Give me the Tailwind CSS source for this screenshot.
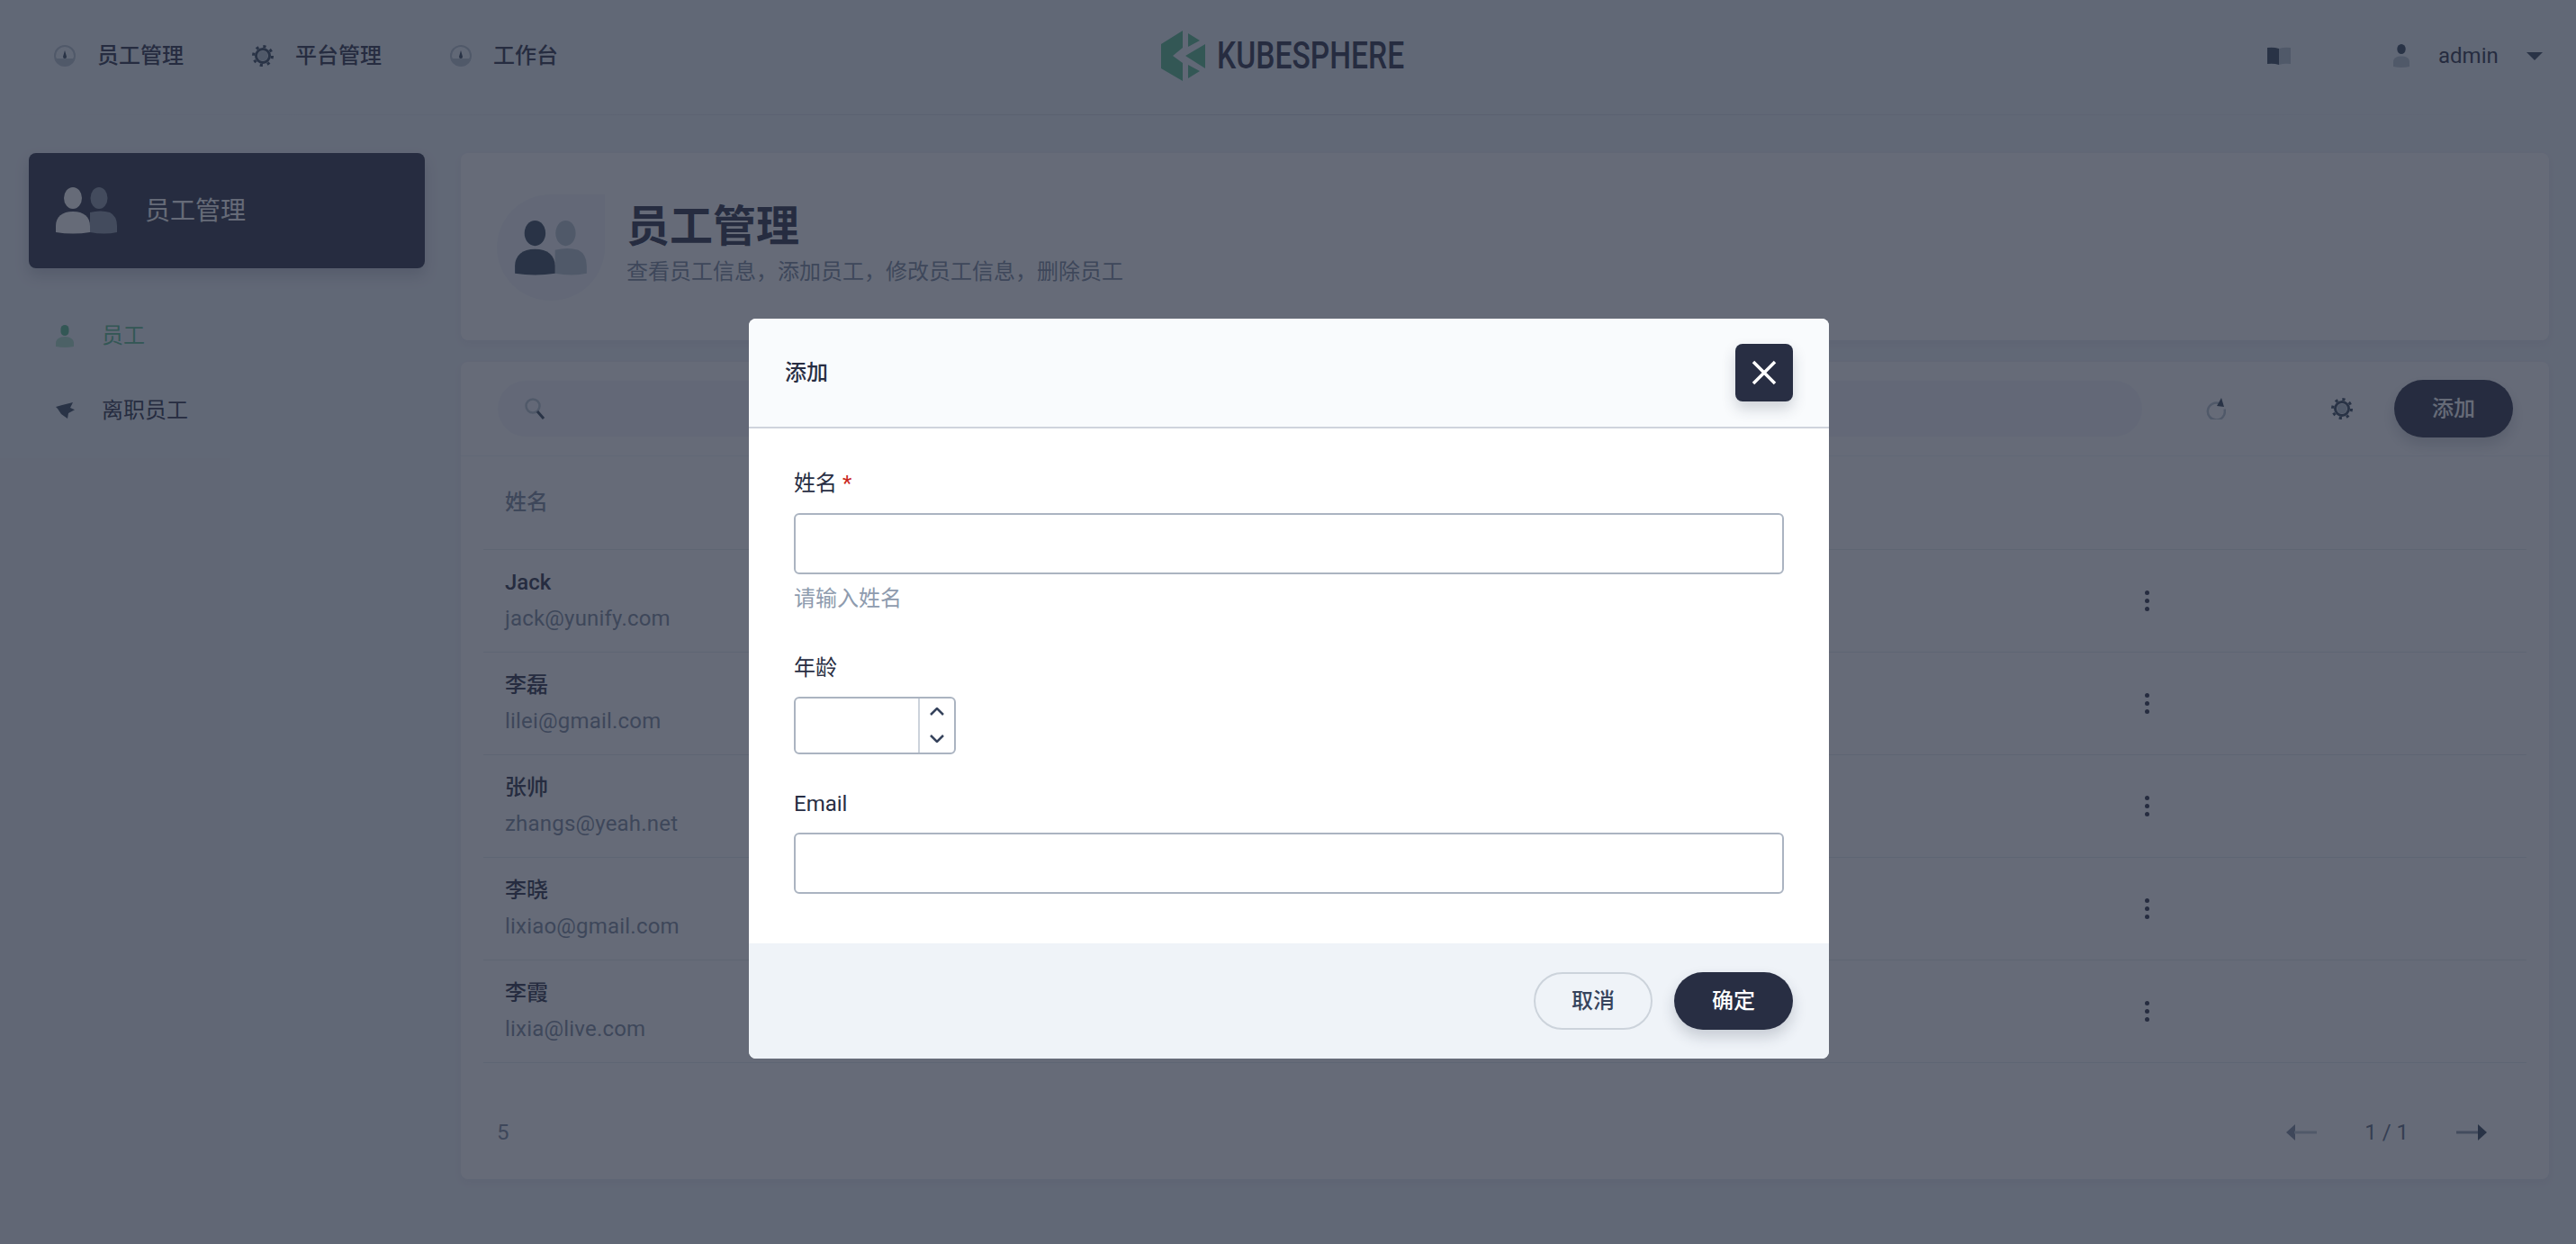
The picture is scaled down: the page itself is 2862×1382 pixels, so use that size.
<!DOCTYPE html>
<html lang="zh-CN">
<head>
  <meta charset="UTF-8">
  <title>KubeSphere 员工管理</title>
  <script src="https://cdn.jsdelivr.net/npm/@tailwindcss/browser@4"></script>
</head>
<body class="relative w-[2862px] h-[1382px] overflow-hidden bg-[#eff3f8] text-[#282e43] text-[24px] font-['Roboto','Noto_Sans_CJK_SC',sans-serif]">

  <!-- Top nav -->
  <header class="h-[128px] flex items-center pb-[4px] relative">
    <div class="w-[1290px] shrink-0 flex items-center pl-[60px] font-medium">
      <svg class="w-[24px] h-[24px] mr-[24px]" viewBox="0 0 24 24"><circle cx="12" cy="12" r="12" fill="#b6c2cd"/><path d="M2 12a10 10 0 0 1 20 0c0 2-1 3-1 3H3s-1-1-1-3z" fill="#eff4f9"/><path d="M12 6l2 7a2 2 0 1 1-4 0z" fill="#324558"/></svg>
      <span class="mr-[76px]">员工管理</span>
      <svg class="w-[24px] h-[24px] mr-[24px]" viewBox="0 0 24 24"><circle cx="12" cy="12" r="10.500" fill="none" stroke="#324558" stroke-width="3" stroke-dasharray="3.200 5.050"/><circle cx="12" cy="12" r="7.500" fill="none" stroke="#324558" stroke-width="3"/><circle cx="12" cy="12" r="5.500" fill="#b6c2cd"/></svg>
      <span class="mr-[76px]">平台管理</span>
      <svg class="w-[24px] h-[24px] mr-[24px]" viewBox="0 0 24 24"><circle cx="12" cy="12" r="12" fill="#b6c2cd"/><path d="M2 12a10 10 0 0 1 20 0c0 2-1 3-1 3H3s-1-1-1-3z" fill="#eff4f9"/><path d="M12 6l2 7a2 2 0 1 1-4 0z" fill="#324558"/></svg>
      <span>工作台</span>
    </div>
    <div class="flex items-center">
      <svg class="w-[49px] h-[56px] mr-[13px]" viewBox="0 0 49 56" fill="#55bc8a"><path d="M24 0L0 15v27l24 14V36l-11-8 11-9z"/><path d="M30 3l13 8-13 7z"/><path d="M49 15v27L27 28z"/><path d="M30 38l13 7-13 8z"/></svg>
      <span class="w-[207px] whitespace-nowrap origin-left scale-x-[0.8] text-[42px] leading-none font-medium">KUBESPHERE</span>
    </div>
    <div class="ml-auto flex items-center pr-[37px]">
      <svg class="w-[26px] h-[20px] mr-[114px]" viewBox="0 0 26 20"><path d="M0 1q7-1 13 1v18q-6-2-13-1z" fill="#324558"/><path d="M13 2q6-2 13-1v18q-7-1-13 1z" fill="#b6c2cd"/></svg>
      <svg class="w-[18px] h-[26px] mr-[32px]" viewBox="0 0 18 26"><ellipse cx="9" cy="5.500" rx="4.700" ry="5.500" fill="#324558"/><path d="M0 20c0-5 4-6.500 9-6.500s9 1.500 9 6.500v5q-9 2-18 0z" fill="#b6c2cd"/></svg>
      <span class="w-[66px] mr-[32px]">admin</span>
      <svg class="w-[18px] h-[9px]" viewBox="0 0 18 9"><path d="M0 0h18l-9 9z" fill="#324558"/></svg>
    </div>
    <div class="absolute left-0 right-0 bottom-0 h-[1px] bg-linear-to-r from-[#eff3f8] via-[#d1d7e0] to-[#eff3f8]"></div>
  </header>

  <div class="flex pt-[42px] pl-[32px]">
    <!-- Sidebar -->
    <aside class="w-[440px] shrink-0">
      <div class="h-[128px] rounded-[8px] bg-[#282e43] text-white text-[28px] flex items-center pl-[30px] shadow-[0_8px_16px_0_rgba(36,46,66,0.2)]">
        <svg class="w-[68px] h-[52px] mr-[31px]" viewBox="0 0 68 52"><ellipse cx="48" cy="12" rx="9.500" ry="12" fill="#8a94a5"/><path d="M38 28q12-3 22 0 8 4 8 15v7q-14 3-30 0z" fill="#8a94a5"/><ellipse cx="19" cy="12" rx="10" ry="12" fill="#fff"/><path d="M0 43c0-10 7-16 19-16s19 6 19 16v7Q19 53 0 50z" fill="#fff"/></svg>
        <span class="pt-[2px]">员工管理</span>
      </div>
      <nav class="mt-[58px] pl-[30px]">
        <div class="h-[34px] flex items-center text-[#55bc8a]">
          <svg class="w-[20px] h-[25px] mr-[31px]" viewBox="0 0 20 25"><rect x="5.500" y="0" width="9" height="12" rx="4.500" fill="#55bc8a"/><path d="M0 20c0-4 4-7 10-7s10 3 10 7v4q-10 2-20 0z" fill="#a8dcc3"/></svg>
          <span>员工</span>
        </div>
        <div class="mt-[49px] h-[34px] flex items-center">
          <svg class="w-[21px] h-[18px] mr-[30px]" viewBox="0 0 21 18"><path d="M0 5l7-2L19 0l-3 6 5 2.300-7 3.700-1 6-7-5-4-6z" fill="#324558"/></svg>
          <span>离职员工</span>
        </div>
      </nav>
    </aside>

    <!-- Content -->
    <main class="ml-[40px] w-[2320px]">
      <section class="h-[208px] rounded-[8px] bg-white shadow-[0_4px_8px_0_rgba(36,46,66,0.06)] flex items-start pl-[40px] pt-[46px]">
        <div class="w-[120px] h-[118px] rounded-[50%] rounded-tr-none bg-[#f3f6fa] flex items-center justify-center shrink-0">
          <svg class="w-[80px] h-[61px]" viewBox="0 0 68 52"><ellipse cx="48" cy="12" rx="9.500" ry="12" fill="#b6c2cd"/><path d="M38 28q12-3 22 0 8 4 8 15v7q-14 3-30 0z" fill="#b6c2cd"/><ellipse cx="19" cy="12" rx="10" ry="12" fill="#324558"/><path d="M0 43c0-10 7-16 19-16s19 6 19 16v7Q19 53 0 50z" fill="#324558"/></svg>
        </div>
        <div class="ml-[24px] pt-[6px]">
          <h1 class="text-[48px] leading-[60px] font-semibold">员工管理</h1>
          <p class="mt-[2px] text-[24px] leading-[36px] text-[#79879c]">查看员工信息，添加员工，修改员工信息，删除员工</p>
        </div>
      </section>

      <section class="mt-[24px] h-[908px] rounded-[8px] bg-white shadow-[0_4px_8px_0_rgba(36,46,66,0.06)]">
        <!-- Toolbar -->
        <div class="h-[105px] border-b border-[#eff3f8] flex items-center pl-[41px] pr-[40px]">
          <div class="w-[1827px] h-[62px] rounded-full bg-[#f3f6fa] flex items-center pl-[29px]">
            <svg class="w-[24px] h-[24px]" viewBox="0 0 24 24"><circle cx="10" cy="9" r="7.500" fill="none" stroke="#b6c2cd" stroke-width="2.500"/><path d="M15 15l7 8" stroke="#324558" stroke-width="3"/></svg>
          </div>
          <svg class="w-[22px] h-[24px] ml-[71px]" viewBox="0 0 22 24"><path d="M15.500 6.500a9.500 9.500 0 1 0 5 6" fill="none" stroke="#b6c2cd" stroke-width="2.500"/><path d="M17 0l3 10-8-1z" fill="#324558"/></svg>
          <svg class="w-[24px] h-[24px] ml-[117px]" viewBox="0 0 24 24"><circle cx="12" cy="12" r="10.500" fill="none" stroke="#324558" stroke-width="3" stroke-dasharray="3.200 5.050"/><circle cx="12" cy="12" r="7.500" fill="none" stroke="#324558" stroke-width="3"/><circle cx="12" cy="12" r="5.500" fill="#b6c2cd"/></svg>
          <button class="ml-[46px] w-[132px] h-[64px] rounded-full bg-[#282e43] text-white font-medium shadow-[0_8px_16px_0_rgba(36,46,66,0.2)]">添加</button>
        </div>

        <!-- Table -->
        <div class="mx-[25px]">
          <div class="h-[104px] border-b border-[#e3e9ef] flex items-center pl-[24px] pb-[2px] font-medium text-[#79879c]">姓名</div>
          <div class="h-[114px] border-b border-[#e3e9ef] flex items-center justify-between pl-[24px] pr-[419px]">
            <div class="leading-[40px] pb-[2px]"><div class="font-medium">Jack</div><div class="text-[#79879c] tracking-[0.2px]">jack@yunify.com</div></div>
            <div class="flex flex-col gap-[3.500px]"><i class="block w-[5.500px] h-[5.500px] rounded-full bg-[#282e43]"></i><i class="block w-[5.500px] h-[5.500px] rounded-full bg-[#282e43]"></i><i class="block w-[5.500px] h-[5.500px] rounded-full bg-[#282e43]"></i></div>
          </div>
          <div class="h-[114px] border-b border-[#e3e9ef] flex items-center justify-between pl-[24px] pr-[419px]">
            <div class="leading-[40px] pb-[2px]"><div class="font-medium">李磊</div><div class="text-[#79879c] tracking-[0.2px]">lilei@gmail.com</div></div>
            <div class="flex flex-col gap-[3.500px]"><i class="block w-[5.500px] h-[5.500px] rounded-full bg-[#282e43]"></i><i class="block w-[5.500px] h-[5.500px] rounded-full bg-[#282e43]"></i><i class="block w-[5.500px] h-[5.500px] rounded-full bg-[#282e43]"></i></div>
          </div>
          <div class="h-[114px] border-b border-[#e3e9ef] flex items-center justify-between pl-[24px] pr-[419px]">
            <div class="leading-[40px] pb-[2px]"><div class="font-medium">张帅</div><div class="text-[#79879c] tracking-[0.2px]">zhangs@yeah.net</div></div>
            <div class="flex flex-col gap-[3.500px]"><i class="block w-[5.500px] h-[5.500px] rounded-full bg-[#282e43]"></i><i class="block w-[5.500px] h-[5.500px] rounded-full bg-[#282e43]"></i><i class="block w-[5.500px] h-[5.500px] rounded-full bg-[#282e43]"></i></div>
          </div>
          <div class="h-[114px] border-b border-[#e3e9ef] flex items-center justify-between pl-[24px] pr-[419px]">
            <div class="leading-[40px] pb-[2px]"><div class="font-medium">李晓</div><div class="text-[#79879c] tracking-[0.2px]">lixiao@gmail.com</div></div>
            <div class="flex flex-col gap-[3.500px]"><i class="block w-[5.500px] h-[5.500px] rounded-full bg-[#282e43]"></i><i class="block w-[5.500px] h-[5.500px] rounded-full bg-[#282e43]"></i><i class="block w-[5.500px] h-[5.500px] rounded-full bg-[#282e43]"></i></div>
          </div>
          <div class="h-[114px] border-b border-[#e3e9ef] flex items-center justify-between pl-[24px] pr-[419px]">
            <div class="leading-[40px] pb-[2px]"><div class="font-medium">李霞</div><div class="text-[#79879c] tracking-[0.2px]">lixia@live.com</div></div>
            <div class="flex flex-col gap-[3.500px]"><i class="block w-[5.500px] h-[5.500px] rounded-full bg-[#282e43]"></i><i class="block w-[5.500px] h-[5.500px] rounded-full bg-[#282e43]"></i><i class="block w-[5.500px] h-[5.500px] rounded-full bg-[#282e43]"></i></div>
          </div>
        </div>

        <!-- Pagination -->
        <div class="h-[129px] flex items-center pl-[40px] pr-[69px] pt-[24px] text-[#79879c]">
          <span>5</span>
          <div class="ml-auto flex items-center">
            <svg class="w-[34px] h-[18px]" viewBox="0 0 34 18"><path d="M0 9l10-9v18z" fill="#79879c"/><rect x="9" y="7.500" width="25" height="3" fill="#b6c2cd"/></svg>
            <span class="mx-[53px] text-[#5a6a80]">1 / 1</span>
            <svg class="w-[34px] h-[18px]" viewBox="0 0 34 18"><rect x="0" y="7.500" width="25" height="3" fill="#8a96a8"/><path d="M34 9L24 0v18z" fill="#324558"/></svg>
          </div>
        </div>
      </section>
    </main>
  </div>

  <!-- Modal -->
  <div class="absolute inset-0 bg-[rgba(37,44,62,0.7)] flex justify-center pl-[2px] pt-[354px]">
    <div class="w-[1200px] h-[822px] rounded-[8px] overflow-hidden bg-white flex flex-col">
      <div class="h-[122px] shrink-0 bg-[#f9fbfd] border-b-2 border-[#cfd3dc] flex items-center justify-between pl-[40px] pr-[40px]">
        <span class="font-medium">添加</span>
        <button class="w-[64px] h-[64px] rounded-[8px] bg-[#282e43] flex items-center justify-center shadow-[0_8px_16px_0_rgba(36,46,66,0.2)]">
          <svg class="w-[28px] h-[28px]" viewBox="0 0 28 28"><path d="M2 2l24 24M26 2L2 26" stroke="#fff" stroke-width="3.500"/></svg>
        </button>
      </div>
      <form class="flex-1 px-[50px] pt-[45px]">
        <label class="block leading-[32px]">姓名 <span class="text-[#ca2621]">*</span></label>
        <input type="text" class="mt-[17px] block w-full h-[68px] rounded-[6px] border-2 border-[#abb4c1] bg-white">
        <p class="mt-[11px] leading-[32px] text-[#8e9bae]">请输入姓名</p>
        <label class="mt-[45px] block leading-[32px]">年龄</label>
        <div class="mt-[16px] w-[180px] h-[64px] rounded-[6px] border-2 border-[#abb4c1] flex">
          <input type="text" class="w-[138px] h-full border-r-2 border-[#ccd3db]">
          <div class="flex-1 flex flex-col items-center justify-center gap-[21px] pb-[2px]">
            <svg class="w-[16px] h-[9px]" viewBox="0 0 16 9"><path d="M1 8l7-7 7 7" fill="none" stroke="#36435c" stroke-width="2.500"/></svg>
            <svg class="w-[16px] h-[9px]" viewBox="0 0 16 9"><path d="M1 1l7 7 7-7" fill="none" stroke="#36435c" stroke-width="2.500"/></svg>
          </div>
        </div>
        <label class="mt-[39px] block leading-[32px]">Email</label>
        <input type="text" class="mt-[16px] block w-full h-[68px] rounded-[6px] border-2 border-[#abb4c1] bg-white">
      </form>
      <div class="h-[128px] shrink-0 bg-[#eff3f8] flex items-center justify-end gap-[24px] pr-[40px]">
        <button class="w-[132px] h-[64px] rounded-full border-2 border-[#ccd3db] text-[#36435c] font-medium">取消</button>
        <button class="w-[132px] h-[64px] rounded-full bg-[#282e43] text-white font-medium shadow-[0_8px_16px_0_rgba(36,46,66,0.2)]">确定</button>
      </div>
    </div>
  </div>
</body>
</html>
